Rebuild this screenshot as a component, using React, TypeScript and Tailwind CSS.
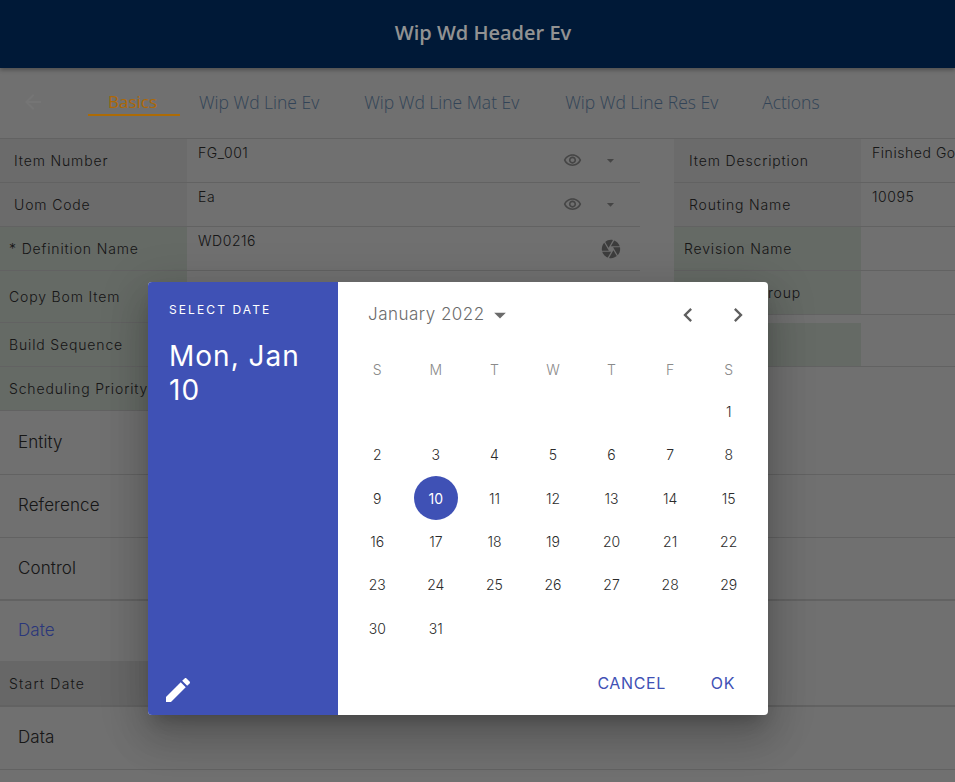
import React from "react";

const P = {
  eye: "M12 6c3.79 0 7.17 2.13 8.82 5.5C19.17 14.87 15.79 17 12 17s-7.17-2.13-8.82-5.5C4.83 8.13 8.21 6 12 6m0-2C7 4 2.73 7.11 1 11.5 2.73 15.89 7 19 12 19s9.27-3.11 11-7.5C21.27 7.11 17 4 12 4zm0 5c1.38 0 2.5 1.12 2.5 2.5S13.38 14 12 14s-2.5-1.12-2.5-2.5S10.62 9 12 9m0-2c-2.48 0-4.5 2.02-4.5 4.5S9.52 16 12 16s4.5-2.02 4.5-4.5S14.48 7 12 7z",
  down: "M7 10l5 5 5-5z",
  cam: "M9.4 10.5l4.77-8.26C13.47 2.09 12.75 2 12 2c-2.4 0-4.6.85-6.32 2.25l3.66 6.35.06-.1zM21.54 9c-.92-2.92-3.15-5.26-6-6.34L11.88 9h9.66zm.26 1h-7.49l.29.5 4.76 8.25C21 16.97 22 14.61 22 12c0-.69-.07-1.35-.2-2zM8.54 12l-3.9-6.75C3.01 7.03 2 9.39 2 12c0 .69.07 1.35.2 2h7.49l-1.15-2zm-6.08 3c.92 2.92 3.15 5.26 6 6.34L12.12 15H2.46zm11.27 0l-3.9 6.76c.7.15 1.42.24 2.17.24 2.4 0 4.6-.85 6.32-2.25l-3.66-6.35-.93 1.6z",
  edit: "M3 17.25V21h3.75L17.81 9.94l-3.75-3.75L3 17.25zM20.71 7.04c.39-.39.39-1.02 0-1.41l-2.34-2.34c-.39-.39-1.02-.39-1.41 0l-1.83 1.83 3.75 3.75 1.83-1.83z",
  left: "M15.41 7.41L14 6l-6 6 6 6 1.41-1.41L10.83 12z",
  right: "M10 6L8.59 7.41 13.17 12l-4.58 4.59L10 18l6-6z",
  back: "M20 11H7.83l5.59-5.59L12 4l-8 8 8 8 1.41-1.41L7.83 13H20v-2z",
};

function Ico({ d, className }: { d: string; className: string }) {
  return (
    <svg viewBox="0 0 24 24" fill="currentColor" className={className}>
      <path d={d} />
    </svg>
  );
}

function Row({
  label,
  value,
  pad,
  h,
  green,
  icons,
  w,
}: {
  label: string;
  value?: string;
  pad: string;
  h: string;
  green?: boolean;
  icons?: "lov" | "cam";
  w: string;
}) {
  return (
    <div className={`flex ${h} border-b border-[#919191] ${w}`}>
      <div
        className={`w-[187px] shrink-0 flex items-center ${pad} text-[14px] font-light tracking-[0.85px] text-[#222] whitespace-nowrap ${
          green ? "bg-[#969c96]" : "bg-[#9e9e9e]"
        }`}
      >
        {label}
      </div>
      <div className="flex-1 flex min-w-0 overflow-hidden bg-[#a5a5a5]">
        <div className="flex-1 pl-[11px] pt-[4px] text-[14px] font-light leading-[20px] tracking-[0.55px] text-[#222] whitespace-nowrap">
          {value}
        </div>
        {icons === "lov" && (
          <div className="flex items-center gap-[20px] pr-[21px] text-[#666]">
            <Ico d={P.eye} className="w-[19px] h-[19px]" />
            <Ico d={P.down} className="w-[17px] h-[17px]" />
          </div>
        )}
        {icons === "cam" && (
          <div className="flex items-center pr-[18px] text-[#5a5a5a]">
            <Ico d={P.cam} className="w-[22px] h-[22px]" />
          </div>
        )}
      </div>
    </div>
  );
}

function Acc({ label, h, blue, thick }: { label: string; h: string; blue?: boolean; thick?: boolean }) {
  return (
    <div
      className={`${h} flex items-center pl-[18px] text-[17px] font-light tracking-[0.1px] ${
        blue ? "text-[#3f51b5]" : "text-[#222]"
      } border-[#919191] ${thick ? "border-b-2" : "border-b"}`}
    >
      {label}
    </div>
  );
}

const weeks = [
  ["", "", "", "", "", "", "1"],
  ["2", "3", "4", "5", "6", "7", "8"],
  ["9", "10", "11", "12", "13", "14", "15"],
  ["16", "17", "18", "19", "20", "21", "22"],
  ["23", "24", "25", "26", "27", "28", "29"],
  ["30", "31", "", "", "", "", ""],
];

export default function App() {
  const font = "font-['Inter','Liberation_Sans',sans-serif]";
  return (
    <div className={`relative w-[955px] h-[782px] overflow-hidden bg-[#a5a5a5] ${font}`}>
      <header className="relative z-10 h-[68px] pb-[2px] pl-[11px] bg-[#002652] flex items-center justify-center text-[#d8d8d8] text-[20px] font-semibold font-['Open_Sans',sans-serif] shadow-[0_2px_4px_rgba(0,0,0,0.3)]">
        Wip Wd Header Ev
      </header>

      <nav className="relative h-[71px] pb-[2px] border-b border-[#919191] flex items-center font-['Open_Sans',sans-serif] font-light text-[17.5px] text-[#4a6480] whitespace-nowrap">
        <Ico d={P.back} className="absolute left-[21px] top-[22px] w-[24px] h-[24px] text-[#adadad]" />
        <div className="ml-[88px] w-[92px] h-[69px] pl-[20px] flex items-center relative font-normal text-[17px] text-[#ff9a08]">
          Basics
          <span className="absolute left-0 right-0 top-[46px] h-[2px] bg-[#ff9e08]" />
        </div>
        <span className="ml-[19px]">Wip Wd Line Ev</span>
        <span className="ml-[45px]">Wip Wd Line Mat Ev</span>
        <span className="ml-[46px]">Wip Wd Line Res Ev</span>
        <span className="ml-[44px]">Actions</span>
      </nav>

      <div className="flex">
        <div className="w-[640px]">
          <Row w="w-[640px]" h="h-[44px]" pad="pl-[14px]" label="Item Number" value="FG_001" icons="lov" />
          <Row w="w-[640px]" h="h-[44px]" pad="pl-[14px]" label="Uom Code" value="Ea" icons="lov" />
          <Row w="w-[640px]" h="h-[44px]" pad="pl-[9px]" green label="* Definition Name" value="WD0216" icons="cam" />
          <Row w="w-[640px]" h="h-[52px]" pad="pl-[9px]" green label="Copy Bom Item" />
          <Row w="w-[640px]" h="h-[44px]" pad="pl-[9px]" green label="Build Sequence" />
          <Row w="w-[640px]" h="h-[44px]" pad="pl-[9px]" green label="Scheduling Priority" />
        </div>
        <div className="ml-[34px] flex-1 min-w-0">
          <Row w="w-full" h="h-[44px]" pad="pl-[15px]" label="Item Description" value="Finished Goods" />
          <Row w="w-full" h="h-[44px]" pad="pl-[15px]" label="Routing Name" value="10095" />
          <Row w="w-full" h="h-[44px]" pad="pl-[10px]" green label="Revision Name" />
          <Row w="w-full" h="h-[44px]" pad="pl-[10px]" green label="Schedule Group" />
          <div className="mt-[8px]">
            <Row w="w-full" h="h-[44px]" pad="pl-[10px]" green label="Status" />
          </div>
        </div>
      </div>

      <Acc label="Entity" h="h-[64px]" />
      <Acc label="Reference" h="h-[63px]" />
      <Acc label="Control" h="h-[63px]" thick />
      <div className="h-[60px] flex items-center pl-[18px] text-[17px] font-light tracking-[0.1px] text-[#3f51b5]">Date</div>
      <div className="h-[46px] flex border-b-2 border-[#919191]">
        <div className="w-[187px] bg-[#989898] flex items-center pl-[9px] text-[14px] font-light tracking-[1.2px] text-[#222]">Start Date</div>
      </div>
      <Acc label="Data" h="h-[63px]" />

      <div className="absolute inset-0 z-20 bg-black/[0.32]" />

      <div className="absolute z-30 left-[148px] top-[282px] w-[620px] h-[433px] rounded-[4px] overflow-hidden bg-white flex shadow-[0_11px_15px_-7px_rgba(0,0,0,0.2),0_24px_38px_3px_rgba(0,0,0,0.14),0_9px_46px_8px_rgba(0,0,0,0.12)]">
        <aside className="w-[190px] shrink-0 bg-[#3f51b5] text-white flex flex-col pl-[21px] pr-[16px]">
          <div className="pt-[21px] text-[12px] leading-[14px] tracking-[2.1px] font-normal whitespace-nowrap">SELECT DATE</div>
          <div className="mt-[22px] text-[28px] leading-[34px] tracking-[1px] font-normal">Mon, Jan 10</div>
          <Ico d={P.edit} className="mt-auto mb-[9px] -ml-[7px] w-[32px] h-[32px]" />
        </aside>
        <section className="flex-1 flex flex-col min-w-0">
          <div className="h-[66px] flex items-center pl-[30px] pr-[16px] text-[#666]">
            <span className="text-[17px] tracking-[0.5px] text-[#6b6b6b] font-light">January 2022</span>
            <Ico d={P.down} className="ml-[1px] w-[28px] h-[28px] text-[#6b6b6b]" />
            <Ico d={P.left} className="ml-auto w-[28px] h-[28px] text-[#5f5f5f]" />
            <Ico d={P.right} className="ml-[22px] w-[28px] h-[28px] text-[#5f5f5f]" />
          </div>
          <div className="grid grid-cols-7 px-[10px] text-[14px] text-[#8a8a8a] font-light h-[42px] items-center">
            {["S", "M", "T", "W", "T", "F", "S"].map((d, i) => (
              <div key={i} className="text-center">{d}</div>
            ))}
          </div>
          <div className="grid grid-cols-7 grid-rows-6 px-[10px] h-[260px] text-[14px] text-[#2b2b2b] font-light">
            {weeks.flat().map((d, i) => (
              <div key={i} className="flex items-center justify-center">
                {d === "10" ? (
                  <span className="w-[44px] h-[44px] rounded-full bg-[#3f51b5] text-white font-normal flex items-center justify-center">10</span>
                ) : (
                  d
                )}
              </div>
            ))}
          </div>
          <div className="mt-auto h-[64px] flex items-center justify-end pr-[33px] text-[16px] text-[#3f51b5] font-normal">
            <span className="tracking-[0.6px]">CANCEL</span>
            <span className="ml-[45px] tracking-[0.6px]">OK</span>
          </div>
        </section>
      </div>
    </div>
  );
}
